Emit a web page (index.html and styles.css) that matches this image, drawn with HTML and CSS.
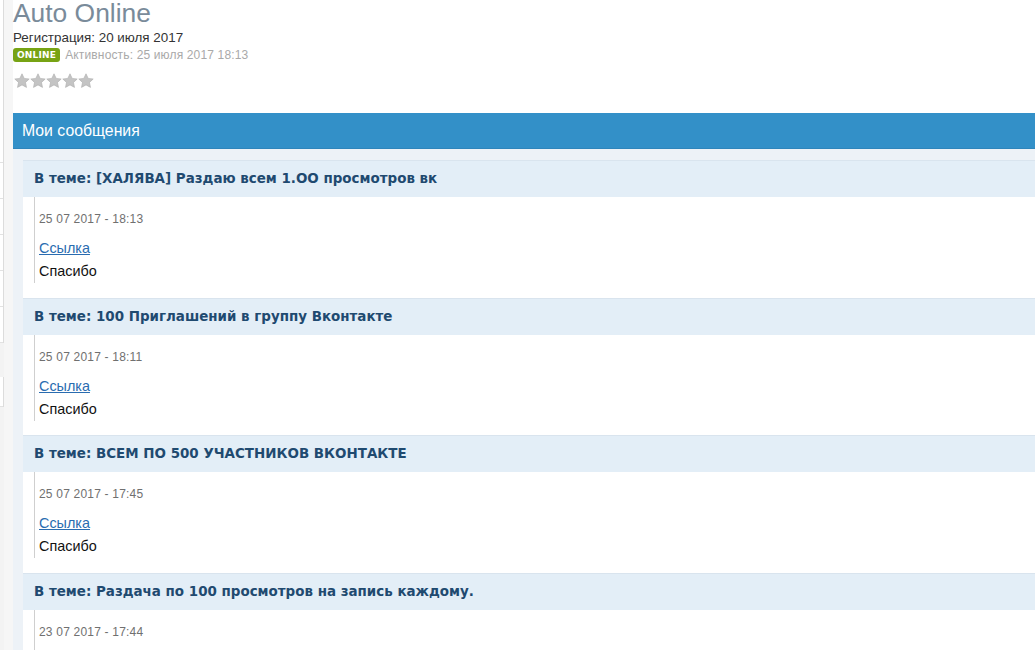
FILE: index.html
```html
<!DOCTYPE html>
<html lang="ru">
<head>
<meta charset="utf-8">
<title>Auto Online</title>
<link rel="stylesheet" href="styles.css">
</head>
<body>
<div class="page">
  <aside class="side">
    <ul class="side-box side-box--top">
      <li></li><li></li><li></li><li></li><li></li><li></li>
    </ul>
    <ul class="side-box side-box--low">
      <li></li>
    </ul>
  </aside>
  <div class="gutter"></div>
  <main class="main">
    <header class="profile">
      <h1 class="profile-name">Auto Online</h1>
      <div class="profile-reg">Регистрация: 20 июля 2017</div>
      <div class="profile-status">
        <span class="badge">ONLINE</span>
        <span class="activity">Активность: 25 июля 2017 18:13</span>
      </div>
      <div class="stars">
        <svg class="star" viewBox="0 0 16 16"><path d="M8 0.8l2.2 4.6 5 .6-3.7 3.4 1 5-4.5-2.5-4.5 2.5 1-5L0.8 6l5-.6z"/></svg>
        <svg class="star" viewBox="0 0 16 16"><path d="M8 0.8l2.2 4.6 5 .6-3.7 3.4 1 5-4.5-2.5-4.5 2.5 1-5L0.8 6l5-.6z"/></svg>
        <svg class="star" viewBox="0 0 16 16"><path d="M8 0.8l2.2 4.6 5 .6-3.7 3.4 1 5-4.5-2.5-4.5 2.5 1-5L0.8 6l5-.6z"/></svg>
        <svg class="star" viewBox="0 0 16 16"><path d="M8 0.8l2.2 4.6 5 .6-3.7 3.4 1 5-4.5-2.5-4.5 2.5 1-5L0.8 6l5-.6z"/></svg>
        <svg class="star" viewBox="0 0 16 16"><path d="M8 0.8l2.2 4.6 5 .6-3.7 3.4 1 5-4.5-2.5-4.5 2.5 1-5L0.8 6l5-.6z"/></svg>
      </div>
    </header>

    <section class="block">
      <h2 class="block-title">Мои сообщения</h2>
      <div class="block-body">
        <article class="post">
          <h3 class="post-title">В теме: [ХАЛЯВА] Раздаю всем 1.ОО просмотров вк</h3>
          <div class="post-body">
            <div class="post-content">
              <div class="post-date">25 07 2017 - 18:13</div>
              <p class="post-text"><a href="#" class="post-link">Ссылка</a><br>Спасибо</p>
            </div>
          </div>
        </article>
        <article class="post">
          <h3 class="post-title">В теме: 100 Приглашений в группу Вконтакте</h3>
          <div class="post-body">
            <div class="post-content">
              <div class="post-date">25 07 2017 - 18:11</div>
              <p class="post-text"><a href="#" class="post-link">Ссылка</a><br>Спасибо</p>
            </div>
          </div>
        </article>
        <article class="post">
          <h3 class="post-title">В теме: ВСЕМ ПО 500 УЧАСТНИКОВ ВКОНТАКТЕ</h3>
          <div class="post-body">
            <div class="post-content">
              <div class="post-date">25 07 2017 - 17:45</div>
              <p class="post-text"><a href="#" class="post-link">Ссылка</a><br>Спасибо</p>
            </div>
          </div>
        </article>
        <article class="post">
          <h3 class="post-title">В теме: Раздача по 100 просмотров на запись каждому.</h3>
          <div class="post-body">
            <div class="post-content">
              <div class="post-date">23 07 2017 - 17:44</div>
              <p class="post-text"><a href="#" class="post-link">Ссылка</a><br>Спасибо</p>
            </div>
          </div>
        </article>
      </div>
    </section>
  </main>
</div>
</body>
</html>
```

FILE: styles.css
```css
html, body {
  margin: 0;
  padding: 0;
  background: #ffffff;
}

body {
  font-family: "Liberation Sans", Arial, sans-serif;
  color: #222;
}

.page {
  display: flex;
  align-items: stretch;
  height: 650px;
  overflow: hidden;
}

/* left sidebar sliver */
.side {
  flex: none;
  width: 4px;
  background: #f3f3f3;
  display: flex;
  flex-direction: column;
}

.side-box {
  list-style: none;
  margin: 0;
  padding: 0;
  background: #fff;
  border-right: 1px solid #dcdcdc;
}

.side-box li {
  border-bottom: 1px solid #e2e2e2;
  height: 35px;
}

.side-box--top li:first-child {
  height: 162px;
}

.side-box--low {
  margin-top: 34px;
}

.side-box--low li {
  height: 29px;
}

.gutter {
  flex: none;
  width: 9px;
  background: #f6f6f6;
}

.main {
  flex: none;
  width: 1040px;
}

/* profile header */
.profile {
  height: 113px;
}

.profile-name {
  margin: 0;
  font-size: 26.4px;
  line-height: 26px;
  font-weight: normal;
  color: #7a8b9a;
}

.profile-reg {
  margin-top: 4px;
  font-size: 13.4px;
  line-height: 15px;
  color: #333;
}

.profile-status {
  display: flex;
  align-items: center;
  gap: 5px;
  margin-top: 3px;
  height: 14px;
}

.badge {
  display: inline-block;
  background: #77a314;
  color: #fff;
  font-family: "DejaVu Sans", Verdana, sans-serif;
  font-weight: bold;
  font-size: 9px;
  line-height: 14px;
  height: 14px;
  padding: 0 4px;
  border-radius: 3px;
  letter-spacing: 0.2px;
}

.activity {
  font-size: 12px;
  letter-spacing: 0.15px;
  color: #a9a9a9;
}

.stars {
  display: flex;
  margin-top: 11px;
  margin-left: 1px;
}

.star {
  width: 16px;
  height: 16px;
  fill: #c4c4c4;
  stroke: #acacac;
  stroke-width: 0.6;
}

/* messages block */
.block {
  background: #edf2f7;
}

.block-title {
  margin: 0;
  height: 35px;
  line-height: 35px;
  padding: 0 9px;
  background: #3390c8;
  border-bottom: 1px solid #2f85bb;
  color: #fff;
  font-size: 15.8px;
  font-weight: normal;
}

.block-body {
  padding: 11px 0 0 10px;
}

.post {
  background: #fff;
}

.post-title {
  margin: 0;
  height: 36px;
  line-height: 36px;
  padding: 0 11px;
  border-top: 1px solid #d9e4ee;
  background: #e3eef7;
  color: #1f4a70;
  font-family: "DejaVu Sans", Verdana, sans-serif;
  font-size: 13.45px;
  font-weight: bold;
  white-space: nowrap;
}

.post-body {
  padding: 0 0 14.6px 11px;
}

.post-content {
  border-left: 1px solid #cfcfcf;
  padding: 14px 4px 0;
}

.post-date {
  font-size: 12px;
  letter-spacing: 0.2px;
  line-height: 16px;
  color: #707070;
  margin-bottom: 10px;
}

.post-text {
  margin: 0;
  font-size: 14.4px;
  line-height: 23px;
  color: #111;
}

.post-link {
  color: #2a6cb0;
  text-decoration: underline;
}
```
